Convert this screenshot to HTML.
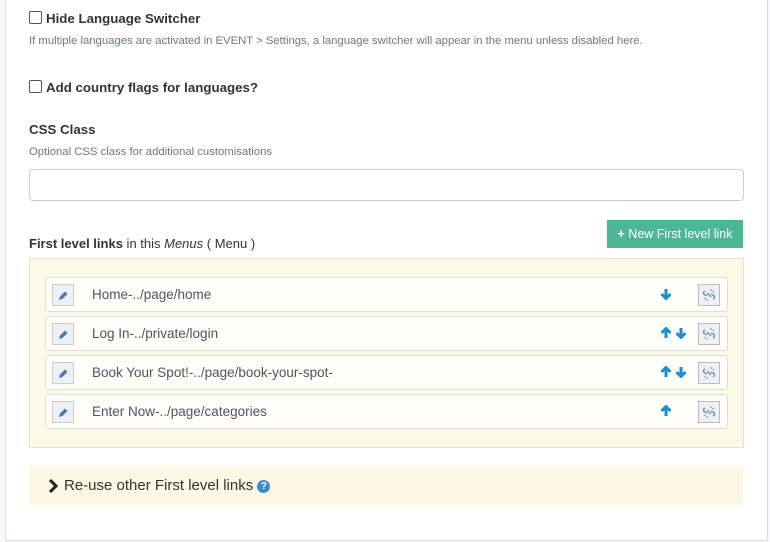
<!DOCTYPE html>
<html><head><style>
body{margin:0;width:770px;height:542px;background:#f7f8fb;font-family:"Liberation Sans",sans-serif;position:relative;overflow:hidden}
.panel{position:absolute;left:5px;top:-2px;width:761px;height:542px;background:#fffffd;border:1px solid #ddd;border-top:none}
.a{position:absolute;white-space:nowrap}
.cb{width:11px;height:11px;border:1px solid #555;border-radius:2px;background:#fff}
.b{font-weight:bold;color:#333;font-size:13.3px}
.h{font-size:11.3px;color:#6b7785}
.row{position:absolute;left:45px;width:681px;height:33px;border:1px solid #ddd;border-radius:3px;background:#fffef8}
.pen{position:absolute;left:6px;top:6px;width:20px;height:20px;border:1px solid #ccc;background:#eef0f4}
.unl{position:absolute;left:652px;top:6px;width:20px;height:20px;border:1px solid #bbb;background:#eef0f4}
.t{position:absolute;left:46px;top:9px;font-size:13.5px;color:#4a5563}
.ar{position:absolute;top:10px}
</style></head><body>
<svg width="0" height="0" style="position:absolute"><defs>
<g id="dn"><path d="M6 1v9M1.5 6l4.5 4.5L10.5 6" stroke="#1a8fd0" stroke-width="3" fill="none"/></g>
<g id="up"><path d="M6 11V2M1.5 6L6 1.5 10.5 6" stroke="#1a8fd0" stroke-width="3" fill="none"/></g>
<g id="pen"><path d="M6 15l1-3.5 5-5 2.5 2.5-5 5z" fill="#4a78b8"/></g>
<g id="ul"><path d="M6 6c-2 1-2 3 0 4l2 1M14 14c2-1 2-3 0-4l-2-1M8 8l4 4" stroke="#6a8ab8" stroke-width="1.3" fill="none"/><path d="M12 4v2M15 6l-1.5 1M5 14l1.5-1M8 16v-2" stroke="#6a8ab8" stroke-width="1"/></g>
</defs></svg>
<div class="panel"></div>
<div class="a cb" style="left:29px;top:11px"></div>
<div class="a b" style="left:46px;top:11px">Hide Language Switcher</div>
<div class="a h" style="left:29px;top:35px">If multiple languages are activated in EVENT &gt; Settings, a language switcher will appear in the menu unless disabled here.</div>
<div class="a cb" style="left:29px;top:80px"></div>
<div class="a b" style="left:46px;top:80px">Add country flags for languages?</div>
<div class="a b" style="left:29px;top:122px">CSS Class</div>
<div class="a h" style="left:29px;top:146px">Optional CSS class for additional customisations</div>
<div class="a" style="left:29px;top:169px;width:713px;height:30px;border:1px solid #ccc;border-radius:4px;background:#fff"></div>
<div class="a" style="left:607px;top:220px;width:136px;height:28px;background:#4cb697;color:#fff;font-size:12.5px;line-height:28px;text-align:center"><b>+</b> New First level link</div>
<div class="a" style="left:29px;top:236px;font-size:13px;color:#333"><b>First level links</b> in this <i>Menus</i> ( Menu )</div>
<div class="a" style="left:29px;top:258px;width:713px;height:188px;border:1px solid #e6e2cc;background:#fdf9e7"></div>
<div class="row" style="top:277px"><div class="pen"><svg width="20" height="20"><use href="#pen"/></svg></div><span class="t">Home-../page/home</span><svg class="ar" style="left:614px" width="12" height="12"><use href="#dn"/></svg><div class="unl"><svg width="20" height="20"><use href="#ul"/></svg></div></div>
<div class="row" style="top:316px"><div class="pen"><svg width="20" height="20"><use href="#pen"/></svg></div><span class="t">Log In-../private/login</span><svg class="ar" style="left:614px" width="12" height="12"><use href="#up"/></svg><svg class="ar" style="left:629px" width="12" height="12"><use href="#dn"/></svg><div class="unl"><svg width="20" height="20"><use href="#ul"/></svg></div></div>
<div class="row" style="top:355px"><div class="pen"><svg width="20" height="20"><use href="#pen"/></svg></div><span class="t">Book Your Spot!-../page/book-your-spot-</span><svg class="ar" style="left:614px" width="12" height="12"><use href="#up"/></svg><svg class="ar" style="left:629px" width="12" height="12"><use href="#dn"/></svg><div class="unl"><svg width="20" height="20"><use href="#ul"/></svg></div></div>
<div class="row" style="top:394px"><div class="pen"><svg width="20" height="20"><use href="#pen"/></svg></div><span class="t">Enter Now-../page/categories</span><svg class="ar" style="left:614px" width="12" height="12"><use href="#up"/></svg><div class="unl"><svg width="20" height="20"><use href="#ul"/></svg></div></div>
<div class="a" style="left:29px;top:466px;width:714px;height:39px;background:#fdf8e3"></div>
<svg class="a" style="left:48px;top:479px" width="10" height="14"><path d="M2 1l6 6-6 6" stroke="#222" stroke-width="3" fill="none"/></svg>
<div class="a" style="left:64px;top:477px;font-size:15px;color:#333">Re-use other First level links <span style="display:inline-block;width:13px;height:13px;border-radius:50%;background:#3d8ac8;color:#fff;font-size:10px;font-weight:bold;text-align:center;line-height:13px;vertical-align:1px">?</span></div>
</body></html>
